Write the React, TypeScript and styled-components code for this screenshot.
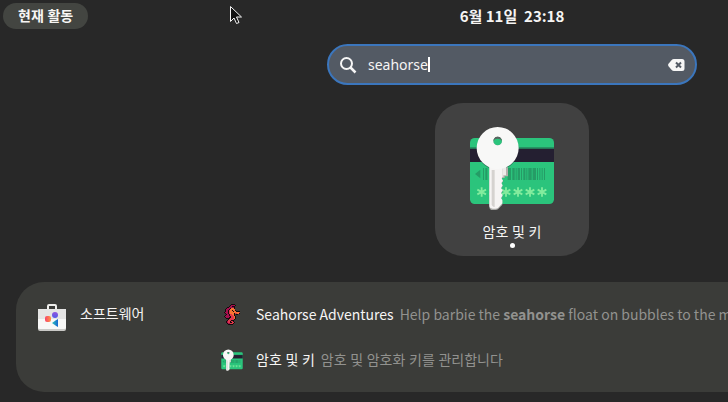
import React, { useState } from 'react';
import styled, { createGlobalStyle } from 'styled-components';

const GlobalStyle = createGlobalStyle`
  * { box-sizing: border-box; }
  html, body { margin: 0; min-height: 100%; background: #282828; overflow: hidden; }
  body, button, input {
    font-family: "Noto Sans", "Noto Sans CJK KR", sans-serif;
    font-size: 14px;
    line-height: 24px;
    color: #f6f5f4;
  }
  button { border: 0; padding: 0; background: none; text-align: left; }
`;

/* The overview is laid out for desktops of at least 1024px. */
const Overview = styled.main`
  min-width: 1024px;
`;

const TopBar = styled.header`
  display: grid;
  grid-template-columns: 1fr auto 1fr;
  align-items: center;
  height: 32px;
  padding: 0 3px;
`;

const Activities = styled.button`
  justify-self: start;
  height: 26px;
  padding: 0 15px;
  border-radius: 13px;
  background: #434541;
  font-weight: 700;
`;

const Clock = styled.time`
  font-family: "Noto Sans CJK KR", sans-serif;
  font-size: 15px;
  font-weight: 700;
  white-space: pre;
`;

const Pointer = styled.svg`
  position: absolute;
  left: 229px;
  top: 5px;
`;

const SearchEntry = styled.label`
  display: flex;
  align-items: center;
  width: 370px;
  height: 41px;
  margin: 12px auto 18px;
  padding: 0 10px;
  border: 2px solid #3b76bd;
  border-radius: 21px;
  background: #535a64;
`;

const SearchInput = styled.input`
  field-sizing: content;
  margin-left: 11px;
  padding: 0;
  border: 0;
  outline: 0;
  background: none;
  caret-color: transparent;
`;

const Caret = styled.span`
  width: 2px;
  height: 15px;
  background: #fff;
`;

const ClearButton = styled.button`
  display: flex;
  margin-left: auto;
`;

const AppTile = styled.button`
  display: flex;
  flex-direction: column;
  align-items: center;
  width: 154px;
  height: 153px;
  margin: 0 auto 26px;
  padding-top: 23px;
  border-radius: 28px;
  background: #414141;
  line-height: 22px;
`;

const TileLabel = styled.span`
  margin-top: 11px;
`;

const RunningDot = styled.span`
  width: 5px;
  height: 5px;
  border-radius: 50%;
  background: #fff;
`;

const ResultsPanel = styled.section`
  display: grid;
  grid-template-columns: 196px 1fr;
  margin: 0 16px;
  padding: 9px 8px;
  border-radius: 28px;
  background: #3b3c39;
`;

const Provider = styled.button`
  display: flex;
  align-items: flex-start;
  align-self: start;
  gap: 12px;
  padding: 11px 12px;
`;

const ResultList = styled.ul`
  margin: 0;
  padding: 0;
  list-style: none;
`;

const Result = styled.button<{ $latin?: boolean }>`
  display: flex;
  align-items: center;
  height: 46px;
  white-space: nowrap;
  ${(p) => p.$latin && 'font-family: "Noto Sans CJK KR", sans-serif;'}
`;

const ResultIcon = styled.span`
  display: flex;
  justify-content: center;
  width: 24px;
  margin-right: 12px;
`;

const Description = styled.span`
  margin-left: 6px;
  color: #92928f;
`;

const digits = [56, 92, 129, 165, 201, 237];
const bars = [
  [60, 3], [67, 6], [134, 10], [148, 7], [158, 3], [164, 7], [174, 3], [181, 6],
  [190, 3], [196, 10], [209, 10], [222, 3], [229, 3], [236, 3], [243, 3],
];

function KeyCardIcon({ width, height }: { width: number; height: number }) {
  return (
    <svg width={width} height={height} viewBox="18 12 258 252" aria-hidden="true">
      <rect x="21" y="48" width="252" height="198" rx="14" fill="#2bc47c" />
      <path d="M21 76h252v4H21z" fill="#26835b" />
      <path d="M21 80h252v40H21z" fill="#241f31" />
      <path d="M36 156l16-13v26z" fill="#259c66" />
      {bars.map(([x, w]) => (
        <rect key={x} x={x} y="138" width={w} height="36" fill="#259c66" />
      ))}
      {digits.map((x) => (
        <path
          key={x}
          d={`M${x} 196v28M${x - 13} 203l26 14M${x - 13} 217l26-14`}
          stroke="#83ec9e"
          strokeWidth="5.5"
        />
      ))}
      <path fillRule="evenodd" d="M104 18a63 63 0 1 0 0 126a63 63 0 1 0 0-126zm0 26a13 13 0 1 1 0 26a13 13 0 1 1 0-26z" fill="#303039" opacity=".45" />
      <path d="M112 136h23v27h-10v5h-13z" fill="#b5b0ac" />
      <path d="M112 134h17v26h-8v5h-9z" fill="#eeecea" />
      <path d="M79 132h40v34l-3 5 4 7-5 7 4 7-5 8 5 7-5 8 5 7-5 8 4 6v12l-13 14q-3 2-8 2h-8q-10 0-10-10z" fill="#a9aaa7" />
      <path d="M79 130h40v34l-3 5 4 7-5 7 4 7-5 8 5 7-5 8 5 7-5 8 4 6v10l-13 14q-3 2-8 2h-8q-10 0-10-10z" fill="#f6f5f4" />
      <path d="M86 144h9v111q-9-1-9-8z" fill="#d5d3d0" />
      <path fillRule="evenodd" d="M104 15a63 63 0 1 0 0 126a63 63 0 1 0 0-126zm0 29a13 13 0 1 1 0 26a13 13 0 1 1 0-26z" fill="#f8f8f7" />
      <path d="M91 57a13 13 0 0 1 26 0a14 11 0 0 0-26 0z" fill="#596660" />
    </svg>
  );
}

function SoftwareIcon() {
  return (
    <svg width="32" height="32" viewBox="0 0 32 32" aria-hidden="true">
      <defs>
        <linearGradient id="sw-red"><stop stopColor="#f7436b" /><stop offset="1" stopColor="#ff9545" /></linearGradient>
        <linearGradient id="sw-violet" x2="0" y2="1"><stop stopColor="#9255dd" /><stop offset="1" stopColor="#535bea" /></linearGradient>
        <linearGradient id="sw-blue"><stop stopColor="#28c3bd" /><stop offset="1" stopColor="#1866cf" /></linearGradient>
      </defs>
      <path d="M12 8V4q0-1 1-1h6q1 0 1 1v4" fill="none" stroke="#eeeeec" strokeWidth="2" />
      <path d="M2 8q0-1 1-1h26q1 0 1 1v19q0 2-2 2H4q-2 0-2-2z" fill="#c9c9c6" />
      <path d="M2 8q0-1 1-1h26q1 0 1 1v18q0 1-2 1H4q-2 0-2-1z" fill="#f8f8f7" />
      <path d="M2 8q0-1 1-1h26q1 0 1 1v9H2z" fill="#e5e5e4" />
      <rect x="9" y="14" width="6" height="6" rx="2" fill="url(#sw-red)" />
      <circle cx="19" cy="13" r="3" fill="url(#sw-violet)" />
      <path d="M22 17v8q-2-1-6-4q4-3 6-4z" fill="url(#sw-blue)" />
    </svg>
  );
}

const spriteColors: Record<string, string> = {
  k: '#160a0c',
  m: '#a5104f',
  r: '#e0374a',
  o: '#fa7432',
};
const sprite = [
  '.......kkkk.....',
  '......kmmmmk....',
  '.....kmmkkk.....',
  '...kkmmmmmk.....',
  '..kmmmkoook.....',
  '.kmmmkooooo.....',
  '.kmmkrookook....',
  '.kmmkroookookkkk',
  'kmmmkrooooooooor',
  '.kmmkrooookrrook',
  '..kmmkrrook.kk..',
  '.kmmmkrrrok.....',
  'kmmmmmkrrrok....',
  '.kmmmkkrrrok....',
  '..kkkkrrrrok....',
  '....krrrrrk.....',
  '...krrrkkk......',
  '..kmrrkrrk......',
  '..kmrrkkrrk.....',
  '...kmmrrrk......',
  '....kkkkk.......',
];

function SeahorseIcon() {
  return (
    <svg width="16" height="21" viewBox="0 0 16 21" shapeRendering="crispEdges" aria-hidden="true">
      {sprite.flatMap((row, y) =>
        [...row].map((c, x) =>
          c === '.' ? null : <rect key={`${x}-${y}`} x={x} y={y} width="1" height="1" fill={spriteColors[c]} />,
        ),
      )}
    </svg>
  );
}

export default function App() {
  const [query, setQuery] = useState('seahorse');
  return (
    <>
      <GlobalStyle />
      <Overview>
        <TopBar>
          <Activities>현재 활동</Activities>
          <Clock>6월 11일  23:18</Clock>
        </TopBar>
        <SearchEntry>
          <svg width="18" height="18" viewBox="0 0 18 18" fill="none" stroke="#f6f6f6" strokeWidth="2" aria-hidden="true">
            <circle cx="7.500" cy="7.500" r="5.500" />
            <path d="M11.500 11.500l5 5" strokeWidth="2.500" />
          </svg>
          <SearchInput aria-label="검색" value={query} onChange={(e) => setQuery(e.target.value)} />
          <Caret />
          <ClearButton aria-label="지우기" onClick={() => setQuery('')}>
            <svg width="17" height="12" viewBox="0 0 17 12" aria-hidden="true">
              <path d="M6 0h8q2.500 0 2.500 2.500v7q0 2.500-2.500 2.500H6Q4.500 12 3.500 10.800L.5 7.200q-.8-1.200 0-2.400L3.500 1.200Q4.500 0 6 0z" fill="#f6f6f6" />
              <path d="M8 3.500l5 5M13 3.500l-5 5" stroke="#535a64" strokeWidth="2" />
            </svg>
          </ClearButton>
        </SearchEntry>
        <AppTile>
          <KeyCardIcon width={86} height={84} />
          <TileLabel>암호 및 키</TileLabel>
          <RunningDot />
        </AppTile>
        <ResultsPanel>
          <Provider>
            <SoftwareIcon />
            <span>소프트웨어</span>
          </Provider>
          <ResultList>
            <li>
              <Result $latin>
                <ResultIcon><SeahorseIcon /></ResultIcon>
                <span>Seahorse Adventures</span>
                <Description>Help barbie the <b>seahorse</b> float on bubbles to the moon</Description>
              </Result>
            </li>
            <li>
              <Result>
                <ResultIcon><KeyCardIcon width={22} height={22} /></ResultIcon>
                <span>암호 및 키</span>
                <Description>암호 및 암호화 키를 관리합니다</Description>
              </Result>
            </li>
          </ResultList>
        </ResultsPanel>
      </Overview>
      <Pointer width="14" height="20" viewBox="0 0 14 20" aria-hidden="true">
        <path d="M1.500 1.500v15l3.500-3.500 2.500 5.500 2.500-1-2.500-5.500h5z" fill="#111" stroke="#f4f4f4" />
      </Pointer>
    </>
  );
}
